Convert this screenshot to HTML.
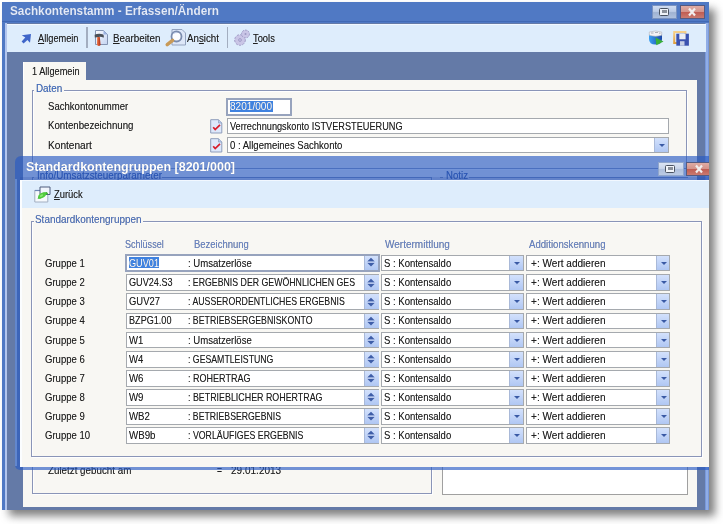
<!DOCTYPE html><html><head><meta charset="utf-8"><style>
*{margin:0;padding:0;box-sizing:border-box}
html,body{width:723px;height:524px;overflow:hidden;background:#fff;font-family:"Liberation Sans",sans-serif;color:#202020}
div{position:absolute}
.t{white-space:nowrap;line-height:14px;font-size:11px;transform-origin:0 0;text-shadow:0 0 0.4px rgba(40,40,40,0.45)}
.inp{background:#fff;border:1px solid #a5a9ae}
.dd{background:linear-gradient(#d3e1fc,#b0c7f3);border:1px solid #a9b9d8;border-width:0 0 0 1px}
.dd i{position:absolute;left:4px;top:6px;width:0;height:0;border-left:3px solid transparent;border-right:3px solid transparent;border-top:3px solid #3a5aa5}
.fs{border:1px solid #8a95b8;box-shadow:inset 1px 1px 0 rgba(255,255,255,0.85),1px 1px 0 rgba(255,255,255,0.85)}
.sh{background:#000}
</style></head><body><div style="left:9px;top:9px;width:706px;height:507px;background:rgba(85,85,85,0.75);filter:blur(4px)"></div>
<div style="left:2px;top:2px;width:707px;height:508px;background:#5079c4"></div>
<div style="left:4.7px;top:22.5px;width:2.3px;height:487.5px;background:#b3c6ee"></div>
<div style="left:705px;top:22.5px;width:4px;height:487.5px;background:#7898da"></div>
<div style="left:706.3px;top:22.5px;width:1.4px;height:487.5px;background:#90ade6"></div>
<div style="left:7px;top:23px;width:698px;height:487px;background:#647aa7"></div>
<div class="t" style="left:10px;top:4.00px;font-size:12px;font-weight:bold;transform:scaleX(0.9794);color:#e2eafb">Sachkontenstamm - Erfassen/Ändern</div>
<div style="left:652px;top:5px;width:25px;height:14px;border:1px solid #7a92c0;background:linear-gradient(#cfdcf1 0,#bccbe6 45%,#9fb2d2 55%,#aec0de 100%)"></div>
<div style="left:659px;top:8px;width:10px;height:8px;border:1.3px solid #4a5362;border-radius:1.5px;background:#eef2f8"></div>
<div style="left:661.5px;top:10.3px;width:5px;height:2.5px;background:#8a909a"></div>
<div style="left:679.5px;top:5px;width:25px;height:14px;border:1px solid #555a80;background:linear-gradient(#dfaca4 0,#d4948c 46%,#c05e54 54%,#c97a70 100%)"></div>
<svg style="position:absolute;left:686px;top:7px" width="12" height="10"><path d="M3 1.5 L9 8.5 M9 1.5 L3 8.5" stroke="#f2eeee" stroke-width="2.2" stroke-linecap="butt"/></svg>
<div style="left:6.5px;top:23.5px;width:699px;height:28px;background:#deedfc"></div>
<div style="left:6.5px;top:23.5px;width:699px;height:1px;background:#f2f8ff"></div>
<div style="left:2px;top:21.3px;width:707px;height:1.2px;background:#4068b4"></div>
<div style="left:86px;top:27px;width:1.5px;height:21px;background:#a3aec0"></div>
<div style="left:226.5px;top:27px;width:1.5px;height:21px;background:#a3aec0"></div>
<div class="t" style="left:38px;top:30.70px;font-size:11px;transform:scaleX(0.8383);"><u style="text-decoration-thickness:1px;text-underline-offset:1px">A</u>llgemein</div>
<div class="t" style="left:112.5px;top:30.70px;font-size:11px;transform:scaleX(0.8925);"><u style="text-decoration-thickness:1px;text-underline-offset:1px">B</u>earbeiten</div>
<div class="t" style="left:187px;top:30.70px;font-size:11px;transform:scaleX(0.8870);">An<u style="text-decoration-thickness:1px;text-underline-offset:1px">s</u>icht</div>
<div class="t" style="left:253px;top:30.70px;font-size:11px;transform:scaleX(0.8487);"><u style="text-decoration-thickness:1px;text-underline-offset:1px">T</u>ools</div>
<svg style="position:absolute;left:0;top:0" width="723" height="60"><path d="M21.8 35.2 L31 34 L30 42.8 L27.4 39.9 L23.6 43.6 L21.6 41.5 L25.3 37.6 Z" fill="#3f66c9"/><defs><linearGradient id="dc" x1="0" x2="1" y1="0" y2="1"><stop offset="0" stop-color="#fbfcff"/><stop offset="1" stop-color="#c4d4f2"/></linearGradient><linearGradient id="hd" x1="0" x2="1"><stop offset="0" stop-color="#f07a4a"/><stop offset="1" stop-color="#a82a12"/></linearGradient></defs><path d="M95.5 30.5 H103.5 L107.5 34.5 V44.5 H95.5 Z" fill="url(#dc)" stroke="#8494b2" stroke-width="1"/><path d="M103.5 30.5 V34.5 H107.5 Z" fill="#9cb4e2"/><path d="M94.6 34.8 Q99 32.8 103.2 34.6 Q104.4 35.8 103.6 37.8 Q101 36.2 97 37.3 L94.8 37.6 Z" fill="#4a5058"/><path d="M97.2 37 L99.8 37 L100.6 45 Q98.9 46.8 97 45 Z" fill="url(#hd)"/><path d="M172 29.5 H182 L185.5 33 V45 H172 Z" fill="#dde7f8" stroke="#93a3bf" stroke-width="1"/><circle cx="176.5" cy="36.5" r="5" fill="#fbfdff" stroke="#7a8cae" stroke-width="1.8"/><path d="M173.5 33.5 Q175 32.3 177 32.6" stroke="#b8c8e8" stroke-width="1" fill="none"/><path d="M172.6 40.3 L167.2 44.6" stroke="#c89a58" stroke-width="3.4" stroke-linecap="round"/><g fill="#c9c5e6" stroke="#9d99c4" stroke-width="1"><circle cx="240" cy="40" r="5.3" stroke-dasharray="2.2 1.3"/><circle cx="240" cy="40" r="4.3" stroke="none"/><circle cx="245.5" cy="34" r="3.9" stroke-dasharray="1.8 1.1"/><circle cx="245.5" cy="34" r="3.1" stroke="none"/></g><circle cx="240" cy="40" r="1.4" fill="none" stroke="#9d99c4" stroke-width="0.9"/><circle cx="245.5" cy="34" r="1" fill="#9d99c4"/><defs><linearGradient id="bx" x1="0" x2="1"><stop offset="0" stop-color="#3aa0f2"/><stop offset="1" stop-color="#1a48a8"/></linearGradient><linearGradient id="fl" x1="0" x2="0" y1="0" y2="1"><stop offset="0" stop-color="#f6d08a"/><stop offset="1" stop-color="#e0a040"/></linearGradient></defs><path d="M649 34.5 H662 V39 Q662 44.5 655.5 44.5 Q649 44.5 649 39 Z" fill="url(#bx)"/><path d="M649.3 32 Q655.5 30 661.7 32 V35.3 Q655.5 37.3 649.3 35.3 Z" fill="#f3f3f5" stroke="#b0b4bc" stroke-width="0.6"/><path d="M651 33 H653.5 M655 32.5 H658 M659 33.2 H660.5" stroke="#9a9ea8" stroke-width="0.8"/><path d="M655.5 37.5 L663.5 41.5 L656.3 45.2 Z" fill="#38b038"/><path d="M674.2 32 H685.4 V43 H674.2 Z" fill="#f0f2f6" fill-opacity="0.3" stroke="url(#fl)" stroke-width="2"/><path d="M676.3 33.7 H688.9 V45.7 H676.3 Z" fill="#3a52b0"/><path d="M679.3 33.7 H685.6 V39.3 H679.3 Z" fill="#eceef4"/><path d="M680 41.2 H684.5 V45.7 H680 Z" fill="#c6cfe6"/></svg>
<div style="left:23px;top:61.5px;width:62.5px;height:20px;background:#f8f7f3;border-left:1px solid #fff"></div>
<div class="t" style="left:31.8px;top:63.70px;font-size:11px;transform:scaleX(0.8369);">1 Allgemein</div>
<div style="left:23px;top:80px;width:674px;height:426.5px;background:#f8f7f3"></div>
<div class="fs" style="left:32px;top:90px;width:655px;height:78.5px"></div>
<div style="left:34px;top:85px;width:30px;height:10px;background:#f8f7f3"></div>
<div class="t" style="left:35.7px;top:80.50px;font-size:11px;transform:scaleX(0.8958);color:#3c6bc4">Daten</div>
<div class="t" style="left:47.7px;top:99.20px;font-size:11px;transform:scaleX(0.8697);">Sachkontonummer</div>
<div class="t" style="left:47.7px;top:117.90px;font-size:11px;transform:scaleX(0.8792);">Kontenbezeichnung</div>
<div class="t" style="left:47.8px;top:137.80px;font-size:11px;transform:scaleX(0.9203);">Kontenart</div>
<div class="inp" style="left:225.5px;top:97.5px;width:66px;height:18px;border:2px solid #97a3bd"></div>
<div style="left:229.5px;top:100.5px;width:43.5px;height:11.5px;background:#3f82e0"></div>
<div class="t" style="left:230px;top:99.20px;font-size:11px;transform:scaleX(0.9152);color:#fff">8201/000</div>
<div class="inp" style="left:227px;top:118px;width:442px;height:16px"></div>
<div class="t" style="left:229.8px;top:118.50px;font-size:11px;transform:scaleX(0.8353);">Verrechnungskonto ISTVERSTEUERUNG</div>
<div class="inp" style="left:227px;top:137px;width:442px;height:16px"></div>
<div class="dd" style="left:653.5px;top:138px;width:14.5px;height:14px"><i></i></div>
<div class="t" style="left:229.8px;top:137.50px;font-size:11px;transform:scaleX(0.8670);">0 : Allgemeines Sachkonto</div>
<svg style="position:absolute;left:210px;top:118.5px" width="13" height="15"><path d="M0.7 0.7 H8.5 L11.8 4 V14 H0.7 Z" fill="#dde8fb" stroke="#8e9dbb" stroke-width="1"/><path d="M8.5 0.7 V4 H11.8" fill="#b9cbee" stroke="#8e9dbb" stroke-width="0.7"/><path d="M3.2 8.2 L5.2 10.6 L10 5.8" fill="none" stroke="#d81c2a" stroke-width="1.7"/></svg>
<svg style="position:absolute;left:210px;top:137.5px" width="13" height="15"><path d="M0.7 0.7 H8.5 L11.8 4 V14 H0.7 Z" fill="#dde8fb" stroke="#8e9dbb" stroke-width="1"/><path d="M8.5 0.7 V4 H11.8" fill="#b9cbee" stroke="#8e9dbb" stroke-width="0.7"/><path d="M3.2 8.2 L5.2 10.6 L10 5.8" fill="none" stroke="#d81c2a" stroke-width="1.7"/></svg>
<div class="fs" style="left:32px;top:177px;width:400px;height:316.5px"></div>
<div style="left:34px;top:170px;width:128px;height:10px;background:#f8f7f3"></div>
<div class="t" style="left:36.6px;top:168.20px;font-size:11px;transform:scaleX(0.8968);color:#2a4aa0">Info/Umsatzsteuerparameter</div>
<div style="left:440px;top:177px;width:248px;height:1px;background:#8a95b8"></div>
<div style="left:443px;top:170px;width:26px;height:10px;background:#f8f7f3"></div>
<div class="t" style="left:445.6px;top:168.20px;font-size:11px;transform:scaleX(0.8778);color:#2a4aa0">Notiz</div>
<div class="t" style="left:48px;top:462.70px;font-size:11px;transform:scaleX(0.8903);">Zuletzt gebucht am</div>
<div class="t" style="left:217px;top:462.70px;font-size:11px;transform:scaleX(0.7767);">=</div>
<div class="t" style="left:230.7px;top:462.70px;font-size:11px;transform:scaleX(0.9117);">29.01.2013</div>
<div class="inp" style="left:441.5px;top:182px;width:246.5px;height:312.5px;border-color:#a0a0a0"></div>
<div style="left:14.5px;top:156px;width:694.5px;height:314px;border-radius:6px 0 0 5px;background:rgba(40,90,195,0.65)"></div>
<div style="left:14.5px;top:179px;width:2.5px;height:287px;background:rgba(170,200,245,0.35)"></div>
<div style="left:20px;top:177px;width:689px;height:2.5px;background:rgba(40,70,160,0.18)"></div>
<div class="t" style="left:26.2px;top:160.20px;font-size:12px;font-weight:bold;transform:scaleX(1.0413);color:#fff">Standardkontengruppen [8201/000]</div>
<div style="left:658px;top:162px;width:25.8px;height:13.8px;border:1px solid #90a6cc;background:linear-gradient(#dbe4f3 0,#c9d5ea 45%,#aebfdc 55%,#bccbe4 100%)"></div>
<div style="left:665px;top:165px;width:10px;height:8px;border:1.3px solid #4a5362;border-radius:1.5px;background:#f2f5fa"></div>
<div style="left:667.5px;top:167.3px;width:5px;height:2.5px;background:#8a909a"></div>
<div style="left:686px;top:162px;width:23px;height:13.8px;border:1px solid #555a80;border-right:0;background:linear-gradient(#dfaca4 0,#d4948c 46%,#c05e54 54%,#c97a70 100%)"></div>
<svg style="position:absolute;left:693px;top:164px" width="12" height="10"><path d="M3 1.5 L9 8.5 M9 1.5 L3 8.5" stroke="#f2eeee" stroke-width="2.2" stroke-linecap="butt"/></svg>
<div style="left:20px;top:179.5px;width:689px;height:28px;background:#deedfc"></div>
<div style="left:20px;top:179.5px;width:689px;height:1px;background:#f2f8ff"></div>
<div style="left:20px;top:207.5px;width:689px;height:259px;background:#f8f7f3"></div>
<div style="left:20px;top:179.5px;width:1.5px;height:287px;background:#fbfdff"></div>
<div class="t" style="left:53.6px;top:187.40px;font-size:11px;transform:scaleX(0.8535);"><u style="text-decoration-thickness:1px;text-underline-offset:1px">Z</u>urück</div>
<svg style="position:absolute;left:33px;top:185px" width="20" height="20"><path d="M1.8 5.5 H14.8 V17 H1.8 Z" fill="#f6f9fd" stroke="#a2aec0" stroke-width="1"/><path d="M1.8 5.5 H7" stroke="#6f86b8" stroke-width="1.2"/><path d="M7 2 H17 V9.5 H7 Z" fill="#f0f5fc" stroke="#4e5c7c" stroke-width="1"/><path d="M4.6 13.8 Q5.8 8.2 13.8 7 L15.2 8.8 Q10.5 10.5 7.2 13.8 Z" fill="#3cb82e"/><ellipse cx="9.2" cy="10.4" rx="4.2" ry="2.4" fill="#52cc3e" transform="rotate(-30 9.2 10.4)"/><ellipse cx="8.5" cy="10.6" rx="1.8" ry="1" fill="#8ae872" transform="rotate(-30 8.5 10.6)"/></svg>
<div class="fs" style="left:31.3px;top:220.5px;width:671.2px;height:236.5px"></div>
<div style="left:34px;top:215px;width:109px;height:10px;background:#f8f7f3"></div>
<div class="t" style="left:35.4px;top:212.00px;font-size:11px;transform:scaleX(0.9022);color:#4a70c0">Standardkontengruppen</div>
<div class="t" style="left:125.3px;top:237.40px;font-size:11px;transform:scaleX(0.8220);color:#6683c6">Schlüssel</div>
<div class="t" style="left:194px;top:237.40px;font-size:11px;transform:scaleX(0.8599);color:#6683c6">Bezeichnung</div>
<div class="t" style="left:384.8px;top:237.40px;font-size:11px;transform:scaleX(0.9099);color:#6683c6">Wertermittlung</div>
<div class="t" style="left:528.7px;top:237.40px;font-size:11px;transform:scaleX(0.8746);color:#6683c6">Additionskennung</div>
<div class="t" style="left:45.3px;top:256.00px;font-size:11px;transform:scaleX(0.8676);">Gruppe 1</div>
<div class="inp" style="left:124.8px;top:253.8px;width:255px;height:18px;border:2px solid #97a3bd"></div>
<div style="left:129px;top:257.3px;width:30.4px;height:11px;background:#3f82e0"></div>
<div class="t" style="left:129px;top:256.00px;font-size:11px;transform:scaleX(0.8315);color:#fff">GUV01</div>
<div class="dd" style="left:364px;top:255.8px;width:14px;height:14px;border-width:0 0 0 1px"></div>
<svg style="position:absolute;left:366px;top:256.30px" width="10" height="12"><path d="M1.2 5.6 L5 1.8 L8.8 5.6 Z M1.2 6.8 L5 10.6 L8.8 6.8 Z" fill="#3f5ea8"/><path d="M1 6.2 H9" stroke="#c8d4f2" stroke-width="0.8"/></svg>
<div class="t" style="left:188px;top:256.00px;font-size:11px;transform:scaleX(0.8697);">: Umsatzerlöse</div>
<div class="inp" style="left:380.5px;top:254.5px;width:143.5px;height:16.8px"></div>
<div class="dd" style="left:509px;top:255.5px;width:14px;height:14.8px"><i></i></div>
<div class="t" style="left:383.8px;top:256.00px;font-size:11px;transform:scaleX(0.8652);">S : Kontensaldo</div>
<div class="inp" style="left:526.3px;top:254.5px;width:143.5px;height:16.8px"></div>
<div class="dd" style="left:655.5px;top:255.5px;width:13.5px;height:14.8px"><i></i></div>
<div class="t" style="left:531.2px;top:256.00px;font-size:11px;transform:scaleX(0.9148);">+: Wert addieren</div>
<div class="t" style="left:45.3px;top:275.21px;font-size:11px;transform:scaleX(0.8676);">Gruppe 2</div>
<div class="inp" style="left:125.6px;top:274.31px;width:253.8px;height:16.8px"></div>
<div class="t" style="left:129px;top:275.21px;font-size:11px;transform:scaleX(0.8290);">GUV24.S3</div>
<div class="dd" style="left:364px;top:275.31px;width:14.5px;height:14.8px"></div>
<svg style="position:absolute;left:366px;top:276.51px" width="10" height="12"><path d="M1.2 5.6 L5 1.8 L8.8 5.6 Z M1.2 6.8 L5 10.6 L8.8 6.8 Z" fill="#3f5ea8"/><path d="M1 6.2 H9" stroke="#c8d4f2" stroke-width="0.8"/></svg>
<div class="t" style="left:188px;top:275.21px;font-size:11px;transform:scaleX(0.7965);">: ERGEBNIS DER GEWÖHNLICHEN GES</div>
<div class="inp" style="left:380.5px;top:274.31px;width:143.5px;height:16.8px"></div>
<div class="dd" style="left:509px;top:275.31px;width:14px;height:14.8px"><i></i></div>
<div class="t" style="left:383.8px;top:275.21px;font-size:11px;transform:scaleX(0.8652);">S : Kontensaldo</div>
<div class="inp" style="left:526.3px;top:274.31px;width:143.5px;height:16.8px"></div>
<div class="dd" style="left:655.5px;top:275.31px;width:13.5px;height:14.8px"><i></i></div>
<div class="t" style="left:531.2px;top:275.21px;font-size:11px;transform:scaleX(0.9148);">+: Wert addieren</div>
<div class="t" style="left:45.3px;top:294.32px;font-size:11px;transform:scaleX(0.8676);">Gruppe 3</div>
<div class="inp" style="left:125.6px;top:293.42px;width:253.8px;height:16.8px"></div>
<div class="t" style="left:129px;top:294.32px;font-size:11px;transform:scaleX(0.8565);">GUV27</div>
<div class="dd" style="left:364px;top:294.42px;width:14.5px;height:14.8px"></div>
<svg style="position:absolute;left:366px;top:295.62px" width="10" height="12"><path d="M1.2 5.6 L5 1.8 L8.8 5.6 Z M1.2 6.8 L5 10.6 L8.8 6.8 Z" fill="#3f5ea8"/><path d="M1 6.2 H9" stroke="#c8d4f2" stroke-width="0.8"/></svg>
<div class="t" style="left:188px;top:294.32px;font-size:11px;transform:scaleX(0.7966);">: AUSSERORDENTLICHES ERGEBNIS</div>
<div class="inp" style="left:380.5px;top:293.42px;width:143.5px;height:16.8px"></div>
<div class="dd" style="left:509px;top:294.42px;width:14px;height:14.8px"><i></i></div>
<div class="t" style="left:383.8px;top:294.32px;font-size:11px;transform:scaleX(0.8652);">S : Kontensaldo</div>
<div class="inp" style="left:526.3px;top:293.42px;width:143.5px;height:16.8px"></div>
<div class="dd" style="left:655.5px;top:294.42px;width:13.5px;height:14.8px"><i></i></div>
<div class="t" style="left:531.2px;top:294.32px;font-size:11px;transform:scaleX(0.9148);">+: Wert addieren</div>
<div class="t" style="left:45.3px;top:313.43px;font-size:11px;transform:scaleX(0.8676);">Gruppe 4</div>
<div class="inp" style="left:125.6px;top:312.53px;width:253.8px;height:16.8px"></div>
<div class="t" style="left:129px;top:313.43px;font-size:11px;transform:scaleX(0.8275);">BZPG1.00</div>
<div class="dd" style="left:364px;top:313.53px;width:14.5px;height:14.8px"></div>
<svg style="position:absolute;left:366px;top:314.73px" width="10" height="12"><path d="M1.2 5.6 L5 1.8 L8.8 5.6 Z M1.2 6.8 L5 10.6 L8.8 6.8 Z" fill="#3f5ea8"/><path d="M1 6.2 H9" stroke="#c8d4f2" stroke-width="0.8"/></svg>
<div class="t" style="left:188px;top:313.43px;font-size:11px;transform:scaleX(0.7973);">: BETRIEBSERGEBNISKONTO</div>
<div class="inp" style="left:380.5px;top:312.53px;width:143.5px;height:16.8px"></div>
<div class="dd" style="left:509px;top:313.53px;width:14px;height:14.8px"><i></i></div>
<div class="t" style="left:383.8px;top:313.43px;font-size:11px;transform:scaleX(0.8652);">S : Kontensaldo</div>
<div class="inp" style="left:526.3px;top:312.53px;width:143.5px;height:16.8px"></div>
<div class="dd" style="left:655.5px;top:313.53px;width:13.5px;height:14.8px"><i></i></div>
<div class="t" style="left:531.2px;top:313.43px;font-size:11px;transform:scaleX(0.9148);">+: Wert addieren</div>
<div class="t" style="left:45.3px;top:332.54px;font-size:11px;transform:scaleX(0.8676);">Gruppe 5</div>
<div class="inp" style="left:125.6px;top:331.64px;width:253.8px;height:16.8px"></div>
<div class="t" style="left:129px;top:332.54px;font-size:11px;transform:scaleX(0.8667);">W1</div>
<div class="dd" style="left:364px;top:332.64px;width:14.5px;height:14.8px"></div>
<svg style="position:absolute;left:366px;top:333.84px" width="10" height="12"><path d="M1.2 5.6 L5 1.8 L8.8 5.6 Z M1.2 6.8 L5 10.6 L8.8 6.8 Z" fill="#3f5ea8"/><path d="M1 6.2 H9" stroke="#c8d4f2" stroke-width="0.8"/></svg>
<div class="t" style="left:188px;top:332.54px;font-size:11px;transform:scaleX(0.8697);">: Umsatzerlöse</div>
<div class="inp" style="left:380.5px;top:331.64px;width:143.5px;height:16.8px"></div>
<div class="dd" style="left:509px;top:332.64px;width:14px;height:14.8px"><i></i></div>
<div class="t" style="left:383.8px;top:332.54px;font-size:11px;transform:scaleX(0.8652);">S : Kontensaldo</div>
<div class="inp" style="left:526.3px;top:331.64px;width:143.5px;height:16.8px"></div>
<div class="dd" style="left:655.5px;top:332.64px;width:13.5px;height:14.8px"><i></i></div>
<div class="t" style="left:531.2px;top:332.54px;font-size:11px;transform:scaleX(0.9148);">+: Wert addieren</div>
<div class="t" style="left:45.3px;top:351.65px;font-size:11px;transform:scaleX(0.8676);">Gruppe 6</div>
<div class="inp" style="left:125.6px;top:350.75px;width:253.8px;height:16.8px"></div>
<div class="t" style="left:129px;top:351.65px;font-size:11px;transform:scaleX(0.8667);">W4</div>
<div class="dd" style="left:364px;top:351.75px;width:14.5px;height:14.8px"></div>
<svg style="position:absolute;left:366px;top:352.95px" width="10" height="12"><path d="M1.2 5.6 L5 1.8 L8.8 5.6 Z M1.2 6.8 L5 10.6 L8.8 6.8 Z" fill="#3f5ea8"/><path d="M1 6.2 H9" stroke="#c8d4f2" stroke-width="0.8"/></svg>
<div class="t" style="left:188px;top:351.65px;font-size:11px;transform:scaleX(0.7938);">: GESAMTLEISTUNG</div>
<div class="inp" style="left:380.5px;top:350.75px;width:143.5px;height:16.8px"></div>
<div class="dd" style="left:509px;top:351.75px;width:14px;height:14.8px"><i></i></div>
<div class="t" style="left:383.8px;top:351.65px;font-size:11px;transform:scaleX(0.8652);">S : Kontensaldo</div>
<div class="inp" style="left:526.3px;top:350.75px;width:143.5px;height:16.8px"></div>
<div class="dd" style="left:655.5px;top:351.75px;width:13.5px;height:14.8px"><i></i></div>
<div class="t" style="left:531.2px;top:351.65px;font-size:11px;transform:scaleX(0.9148);">+: Wert addieren</div>
<div class="t" style="left:45.3px;top:370.76px;font-size:11px;transform:scaleX(0.8676);">Gruppe 7</div>
<div class="inp" style="left:125.6px;top:369.86px;width:253.8px;height:16.8px"></div>
<div class="t" style="left:129px;top:370.76px;font-size:11px;transform:scaleX(0.8788);">W6</div>
<div class="dd" style="left:364px;top:370.86px;width:14.5px;height:14.8px"></div>
<svg style="position:absolute;left:366px;top:372.06px" width="10" height="12"><path d="M1.2 5.6 L5 1.8 L8.8 5.6 Z M1.2 6.8 L5 10.6 L8.8 6.8 Z" fill="#3f5ea8"/><path d="M1 6.2 H9" stroke="#c8d4f2" stroke-width="0.8"/></svg>
<div class="t" style="left:188px;top:370.76px;font-size:11px;transform:scaleX(0.8202);">: ROHERTRAG</div>
<div class="inp" style="left:380.5px;top:369.86px;width:143.5px;height:16.8px"></div>
<div class="dd" style="left:509px;top:370.86px;width:14px;height:14.8px"><i></i></div>
<div class="t" style="left:383.8px;top:370.76px;font-size:11px;transform:scaleX(0.8652);">S : Kontensaldo</div>
<div class="inp" style="left:526.3px;top:369.86px;width:143.5px;height:16.8px"></div>
<div class="dd" style="left:655.5px;top:370.86px;width:13.5px;height:14.8px"><i></i></div>
<div class="t" style="left:531.2px;top:370.76px;font-size:11px;transform:scaleX(0.9148);">+: Wert addieren</div>
<div class="t" style="left:45.3px;top:389.87px;font-size:11px;transform:scaleX(0.8676);">Gruppe 8</div>
<div class="inp" style="left:125.6px;top:388.97px;width:253.8px;height:16.8px"></div>
<div class="t" style="left:129px;top:389.87px;font-size:11px;transform:scaleX(0.8788);">W9</div>
<div class="dd" style="left:364px;top:389.97px;width:14.5px;height:14.8px"></div>
<svg style="position:absolute;left:366px;top:391.17px" width="10" height="12"><path d="M1.2 5.6 L5 1.8 L8.8 5.6 Z M1.2 6.8 L5 10.6 L8.8 6.8 Z" fill="#3f5ea8"/><path d="M1 6.2 H9" stroke="#c8d4f2" stroke-width="0.8"/></svg>
<div class="t" style="left:188px;top:389.87px;font-size:11px;transform:scaleX(0.8070);">: BETRIEBLICHER ROHERTRAG</div>
<div class="inp" style="left:380.5px;top:388.97px;width:143.5px;height:16.8px"></div>
<div class="dd" style="left:509px;top:389.97px;width:14px;height:14.8px"><i></i></div>
<div class="t" style="left:383.8px;top:389.87px;font-size:11px;transform:scaleX(0.8652);">S : Kontensaldo</div>
<div class="inp" style="left:526.3px;top:388.97px;width:143.5px;height:16.8px"></div>
<div class="dd" style="left:655.5px;top:389.97px;width:13.5px;height:14.8px"><i></i></div>
<div class="t" style="left:531.2px;top:389.87px;font-size:11px;transform:scaleX(0.9148);">+: Wert addieren</div>
<div class="t" style="left:45.3px;top:408.98px;font-size:11px;transform:scaleX(0.8676);">Gruppe 9</div>
<div class="inp" style="left:125.6px;top:408.08px;width:253.8px;height:16.8px"></div>
<div class="t" style="left:129px;top:408.98px;font-size:11px;transform:scaleX(0.8765);">WB2</div>
<div class="dd" style="left:364px;top:409.08px;width:14.5px;height:14.8px"></div>
<svg style="position:absolute;left:366px;top:410.28px" width="10" height="12"><path d="M1.2 5.6 L5 1.8 L8.8 5.6 Z M1.2 6.8 L5 10.6 L8.8 6.8 Z" fill="#3f5ea8"/><path d="M1 6.2 H9" stroke="#c8d4f2" stroke-width="0.8"/></svg>
<div class="t" style="left:188px;top:408.98px;font-size:11px;transform:scaleX(0.7923);">: BETRIEBSERGEBNIS</div>
<div class="inp" style="left:380.5px;top:408.08px;width:143.5px;height:16.8px"></div>
<div class="dd" style="left:509px;top:409.08px;width:14px;height:14.8px"><i></i></div>
<div class="t" style="left:383.8px;top:408.98px;font-size:11px;transform:scaleX(0.8652);">S : Kontensaldo</div>
<div class="inp" style="left:526.3px;top:408.08px;width:143.5px;height:16.8px"></div>
<div class="dd" style="left:655.5px;top:409.08px;width:13.5px;height:14.8px"><i></i></div>
<div class="t" style="left:531.2px;top:408.98px;font-size:11px;transform:scaleX(0.9148);">+: Wert addieren</div>
<div class="t" style="left:45.3px;top:428.09px;font-size:11px;transform:scaleX(0.8676);">Gruppe 10</div>
<div class="inp" style="left:125.6px;top:427.19px;width:253.8px;height:16.8px"></div>
<div class="t" style="left:129px;top:428.09px;font-size:11px;transform:scaleX(0.8843);">WB9b</div>
<div class="dd" style="left:364px;top:428.19px;width:14.5px;height:14.8px"></div>
<svg style="position:absolute;left:366px;top:429.39px" width="10" height="12"><path d="M1.2 5.6 L5 1.8 L8.8 5.6 Z M1.2 6.8 L5 10.6 L8.8 6.8 Z" fill="#3f5ea8"/><path d="M1 6.2 H9" stroke="#c8d4f2" stroke-width="0.8"/></svg>
<div class="t" style="left:188px;top:428.09px;font-size:11px;transform:scaleX(0.7992);">: VORLÄUFIGES ERGEBNIS</div>
<div class="inp" style="left:380.5px;top:427.19px;width:143.5px;height:16.8px"></div>
<div class="dd" style="left:509px;top:428.19px;width:14px;height:14.8px"><i></i></div>
<div class="t" style="left:383.8px;top:428.09px;font-size:11px;transform:scaleX(0.8652);">S : Kontensaldo</div>
<div class="inp" style="left:526.3px;top:427.19px;width:143.5px;height:16.8px"></div>
<div class="dd" style="left:655.5px;top:428.19px;width:13.5px;height:14.8px"><i></i></div>
<div class="t" style="left:531.2px;top:428.09px;font-size:11px;transform:scaleX(0.9148);">+: Wert addieren</div></body></html>
